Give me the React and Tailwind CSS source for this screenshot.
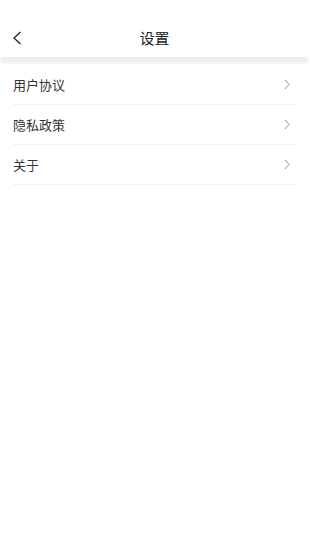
export default function App() {
  const items = ["用户协议", "隐私政策", "关于"];
  return (
    <div className="w-[309px] h-[550px] bg-white" style={{ fontFamily: '"Noto Sans CJK SC", "Noto Sans", sans-serif' }}>
      <div className="h-[21px]" />
      <div className="relative h-[36px] flex items-center justify-center">
        <svg className="absolute left-[12px] top-[10px]" width="10" height="14" viewBox="0 0 10 14" fill="none">
          <path d="M8.5 1 L2 7 L8.5 13" stroke="#222" strokeWidth="1.3" />
        </svg>
        <span className="text-[15px] text-[#222] leading-none -mt-[4px]">设置</span>
      </div>
      <div className="h-[7px] rounded-full bg-gradient-to-b from-[#ededed] to-[#f5f5f5]" />
      <div className="h-[1px]" />
      <div className="px-[13px]">
        {items.map((t) => (
          <div key={t} className="h-[40px] flex items-center justify-between border-b border-[#f0f0f0]">
            <span className="text-[13px] text-[#333]">{t}</span>
            <svg className="mr-[6px]" width="6" height="11" viewBox="0 0 6 11" fill="none">
              <path d="M1 1 L5 5.5 L1 10" stroke="#999" strokeWidth="1" />
            </svg>
          </div>
        ))}
      </div>
    </div>
  );
}
